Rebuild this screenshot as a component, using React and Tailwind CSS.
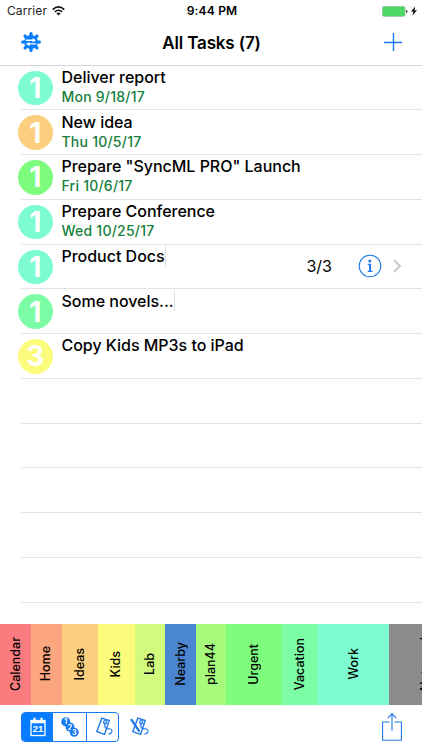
import React from "react";

const tasks = [
  { n: "1", color: "bg-[#7dfcd2]", title: "Deliver report", date: "Mon 9/18/17" },
  { n: "1", color: "bg-[#fbcf7d]", title: "New idea", date: "Thu 10/5/17" },
  { n: "1", color: "bg-[#7dfc7d]", title: 'Prepare "SyncML PRO" Launch', date: "Fri 10/6/17" },
  { n: "1", color: "bg-[#7dfcd2]", title: "Prepare Conference", date: "Wed 10/25/17" },
  { n: "1", color: "bg-[#7dfcd2]", title: "Product Docs", count: "3/3", bar: true },
  { n: "1", color: "bg-[#7dfca6]", title: "Some novels...", bar: true },
  { n: "3", color: "bg-[#fbfb7d]", title: "Copy Kids MP3s to iPad" },
  {}, {}, {}, {}, {},
];

const tags = [
  ["Calendar", "w-[31px] bg-[#fb7c7e]"],
  ["Home", "w-[30.5px] bg-[#fba67e]"],
  ["Ideas", "w-[36.5px] bg-[#fbcf7d]"],
  ["Kids", "w-[36.5px] bg-[#fbfb7d]"],
  ["Lab", "w-[30.5px] bg-[#d1fb7d]"],
  ["Nearby", "w-[31px] bg-[#4b87d1]"],
  ["plan44", "w-[30px] bg-[#a6fb7d]"],
  ["Urgent", "w-[55.5px] bg-[#7dfc7d]"],
  ["Vacation", "w-[36.5px] bg-[#7dfca6]"],
  ["Work", "w-[71px] bg-[#7dfcd2]"],
];

function Gear() {
  return (
    <svg width="20" height="20" viewBox="-10 -10 20 20">
      <g fill="#087cff">
        {[0, 45, 90, 135, 180, 225, 270, 315].map((a) => (
          <g key={a} transform={`rotate(${a})`}>
            <circle cy="-8.4" r="1.6" />
            <path d="M-1.2-8.4h2.4l.9 3.4h-4.2z" />
          </g>
        ))}
        <circle r="6.9" />
      </g>
      <path d="M-5.2-2.4H1.6V-3.9l3.4 2.2L1.6.4V-1h-6.8zM5.2 2.6h-6.8V4.1L-5 1.9-1.6-.2v1.4h6.8z" fill="#fff" />
    </svg>
  );
}

function StatusBar() {
  return (
    <div className="flex h-5 items-center justify-between pl-[7px] pr-[5px] pt-[2px]">
      <div className="flex w-[140px] items-center gap-[5px]">
        <span className="text-[12px] tracking-[0.1px] text-[#222]">Carrier</span>
        <svg width="13" height="10" viewBox="0 0 13 10" fill="none" stroke="#111" strokeWidth="1.6">
          <path d="M.7 3.6Q6.5-1.8 12.3 3.6M2.8 5.9q3.7-3.3 7.4 0" />
          <path d="M6.5 9.4 4.4 7.4q2.1-1.7 4.2 0z" fill="#111" stroke="none" />
        </svg>
      </div>
      <span className="text-[12px] font-semibold tracking-[0.2px]">9:44 PM</span>
      <div className="flex w-[140px] items-center justify-end gap-[3px]">
        <svg width="26" height="11" viewBox="0 0 26 11">
          <rect x=".5" y=".5" width="22.5" height="9.8" rx="1.6" fill="#4cd964" stroke="#96b99b" strokeWidth=".8" />
          <path d="M24 3.5q1.5.4 1.5 1.8T24 7.2z" fill="#555" />
        </svg>
        <svg width="6" height="10" viewBox="0 0 6 10"><path d="M4.2.5 0 5.6h2.3L1.5 9.4 6 4.2H3.5z" fill="#111" /></svg>
      </div>
    </div>
  );
}

function Tag({ label, style }) {
  return (
    <div className={`flex shrink-0 items-center justify-center ${style}`}>
      <span className="rotate-180 whitespace-nowrap text-[12.5px] font-medium leading-[16px] [writing-mode:vertical-rl]">{label}</span>
    </div>
  );
}

function Row({ task }) {
  return (
    <div className="flex h-[44.75px] pl-[18px]">
      <div className="w-[34px] shrink-0 pt-[5px]">
        {task.n && (
          <div className={`flex size-[34.5px] items-center justify-center rounded-full ${task.color}`}>
            <span className="text-[28px] font-bold leading-none text-white">{task.n}</span>
          </div>
        )}
      </div>
      <div className="-ml-[31px] flex flex-1 border-b border-[#e3e3e5] pl-[40.5px]">
        {task.title && (
          <div className="flex-1 pt-[1.4px]">
            <div className="flex items-start">
              <div className={`whitespace-nowrap text-[16px] font-medium leading-[20px] tracking-[-0.02px] ${task.bar ? "border-r border-[#ddd]" : ""}`}>{task.title}</div>
            </div>
            {task.date && <div className="text-[14px] font-medium leading-[20px] tracking-[0.23px] text-[#16803c]">{task.date}</div>}
          </div>
        )}
        {task.count && (
          <div className="flex items-center pr-[19px]">
            <span className="text-[16px]">{task.count}</span>
            <svg className="ml-[26px]" width="24" height="24" viewBox="0 0 24 24" fill="none" stroke="#2078e8">
              <circle cx="12" cy="12" r="10.8" strokeWidth="1.1" />
              <circle cx="11.8" cy="7" r="1.5" fill="#2078e8" stroke="none" />
              <path d="M9.8 10.4h2.4v6.8M9.7 17.4h4.8" strokeWidth="1.1" />
              <path d="M12.1 10v7.4" strokeWidth="2" />
            </svg>
            <svg className="ml-[11px]" width="10" height="14" viewBox="0 0 10 14" fill="none" stroke="#c7c7cc" strokeWidth="1.9">
              <path d="m1 1.2 6 5.8-6 5.8" />
            </svg>
          </div>
        )}
      </div>
    </div>
  );
}

function TagGlyph({ crossed }) {
  return (
    <svg width="20" height="20" viewBox="0 0 20 20" fill="none" stroke="#2078e8" strokeWidth="1.4">
      <path d="m7.8 1.2 7.4 2.3-4.6 13.9-7.8-2.8z" />
      <circle cx="11.2" cy="5.2" r="1.6" strokeWidth="1.2" />
      <path d="M11.2 5.5c-1.4 5 .6 6.8 3.6 6.3 3-.4 3.8 2.2 2.7 3.8-.8 1.2-2 1.3-3 1.3" strokeWidth="1.2" />
      {crossed && <path d="m1 2.2 8.5 12.5" strokeWidth="2.2" />}
    </svg>
  );
}

export default function App() {
  return (
    <div className="flex h-[750px] w-[422px] flex-col overflow-hidden bg-white font-[Inter,sans-serif] text-black">
      <StatusBar />
      <header className="flex h-[45.5px] shrink-0 items-center justify-between border-b border-[#d5d5d8] pl-[21px] pr-[20px]">
        <Gear />
        <h1 className="relative top-px -ml-[2px] text-[17px] font-semibold tracking-[-0.15px]">All Tasks (7)</h1>
        <svg width="18" height="18" viewBox="0 0 18 18" stroke="#1679f0" strokeWidth="1.4"><path d="M9.5 0v18M0 9.5h18" /></svg>
      </header>
      <main className="h-[558px] shrink-0">
        {tasks.map((t, i) => <Row key={i} task={t} />)}
      </main>
      <nav className="flex h-[81px] shrink-0 overflow-hidden">
        {tags.map(([label, style]) => <Tag key={label} label={label} style={style} />)}
        <Tag label="Not used" style="w-[74px] bg-[#8b8b8b]" />
      </nav>
      <footer className="flex flex-1 items-start pl-[21px] pr-[20px] pt-[7px]">
        <div className="flex h-[30px] w-[98px] overflow-hidden rounded-[4px] border border-[#1679f0]">
          <div className="flex w-[31px] items-center justify-center bg-[#087cff]">
            <svg width="16" height="20" viewBox="0 0 16 20" fill="none" stroke="#fff">
              <rect x="1" y="3.5" width="14" height="15" strokeWidth="1.3" />
              <path d="M1 5.2h14" strokeWidth="2.2" />
              <path d="M4.5 .8v4.5M11.5 .8v4.5" strokeWidth="2.2" />
              <text x="8" y="15.4" textAnchor="middle" fontFamily="Liberation Sans, sans-serif" fontSize="9.5" fontWeight="700" fill="#fff" stroke="none">21</text>
            </svg>
          </div>
          <div className="flex w-[34px] items-center justify-center border-r border-[#1679f0]">
            <svg width="18" height="20" viewBox="0 0 18 20">
              {[[4.8, 4.8, "1"], [9, 10, "2"], [13.2, 15.2, "3"]].map(([x, y, n]) => (
                <g key={n}>
                  <circle cx={x} cy={y} r="4.5" fill="#1679f0" />
                  <text x={x} y={y + 2.5} textAnchor="middle" fontSize="7" fontWeight="700" fill="#fff">{n}</text>
                </g>
              ))}
            </svg>
          </div>
          <div className="flex flex-1 items-center justify-center pl-[2px]"><TagGlyph /></div>
        </div>
        <div className="ml-[11px] mt-[5px]"><TagGlyph crossed /></div>
        <svg className="ml-auto mt-[1px]" width="20" height="28" viewBox="0 0 20 28" fill="none" stroke="#2078e8" strokeWidth="1.1">
          <path d="M7.5 9H.6v18.3h18.8V9h-6.9M10 17.5V1M5.7 5.2 10 .9l4.3 4.3" />
        </svg>
      </footer>
    </div>
  );
}
